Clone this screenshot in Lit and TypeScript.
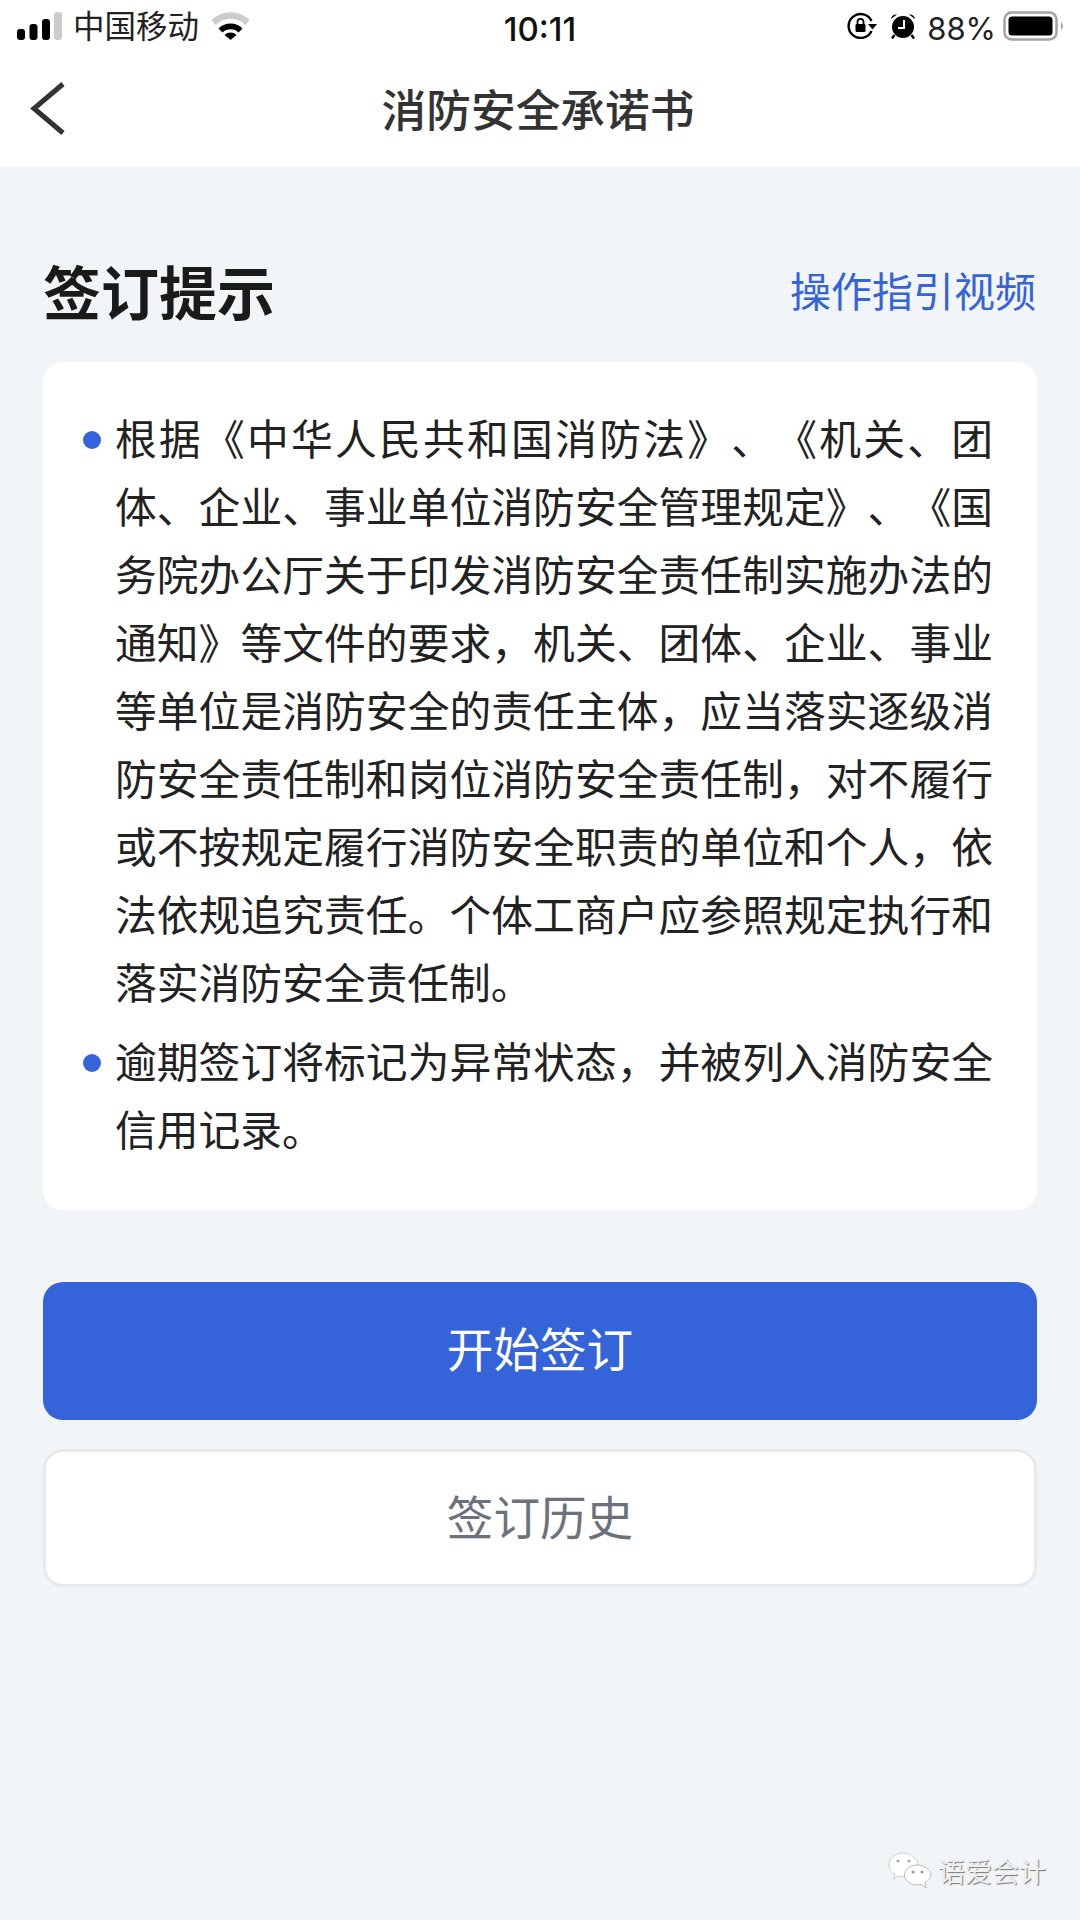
import { LitElement, html, css } from "lit";
import { customElement } from "lit/decorators.js";

@customElement("app-root")
export class AppRoot extends LitElement {
  static styles = css`
    :host { display: block; width: 1080px; height: 1920px; background: #f2f5f8; position: relative; overflow: hidden;
      font-family: "Noto Sans CJK SC", "Noto Sans", sans-serif; color: #222; text-spacing-trim: space-all; }
    .top { background: #fff; height: 167px; display: flex; flex-direction: column; }
    .status { height: 51px; display: grid; grid-template-columns: 1fr auto 1fr; align-items: center; }
    .left, .right { display: flex; align-items: center; }
    .left { padding-left: 17px; }
    .right { justify-content: flex-end; padding-right: 14px; }
    .carrier { font-size: 31.5px; line-height: 40px; margin: -3px 12px 0 11px; color: #222; }
    .time { font-family: Inter, sans-serif; font-size: 33px; font-weight: 500; color: #111; padding-top: 6px; }
    .pct { font-family: Inter, sans-serif; font-size: 31px; margin: 0 7px 0 11px; padding-top: 5px; color: #222; }
    .lock { margin-right: 13px; }
    .nav { flex: 1; display: flex; align-items: center; justify-content: center; position: relative; padding: 0 4px 2px 0; }
    .back { position: absolute; left: 28px; top: 29px; }
    .nav-title { font-size: 44.7px; line-height: 60px; font-weight: 500; color: #333; }
    .main { padding: 84px 43px 0; }
    .head { display: flex; justify-content: space-between; align-items: center; height: 84px; margin-bottom: 27px; }
    .head h1 { margin: -6px 0 0; font-size: 58px; font-weight: 700; color: #1a1a1a; line-height: 84px; }
    .link { font-size: 41px; color: #3563da; line-height: 60px; margin: -8px 1px 0 0; }
    .card { background: #fff; border-radius: 20px; padding: 41px 44px 48px 40px; display: flex; flex-direction: column; gap: 11px; }
    .item { display: flex; }
    .dot { flex: none; width: 18px; height: 18px; border-radius: 50%; background: #3563da; margin: 28px 14px 0 0; }
    .item p { margin: 0; flex: 1; min-width: 0; font-size: 41.75px; line-height: 68px; text-align: justify; color: #222; }
    .btn { display: flex; align-items: center; justify-content: center; border-radius: 20px; font-size: 46.6px; box-sizing: border-box; }
    .primary { margin-top: 72px; height: 138px; background: #3563da; color: #fff; padding-bottom: 10px; }
    .secondary { margin-top: 29px; height: 138px; background: #fff; color: #6c727c; border: 3px solid #e8e9ec; padding-bottom: 8px; }
    .mark { position: absolute; left: 888px; top: 1851px; display: flex; align-items: center; gap: 6px; font-size: 27px; color: #eef0f3; text-shadow: 1px 1px 1px #777; }
  `;

  render() {
    return html`
      <div class="top">
        <div class="status">
          <div class="left">
            <svg width="45" height="28" viewBox="0 0 45 28">
              <rect x="0" y="17" width="8" height="11" rx="3" fill="#000"/>
              <rect x="12.500" y="12" width="8" height="16" rx="3" fill="#000"/>
              <rect x="25" y="7" width="8" height="21" rx="3" fill="#000"/>
              <rect x="37" y="0" width="8" height="28" rx="3" fill="#ccc"/>
            </svg>
            <span class="carrier">中国移动</span>
            <svg width="39" height="29" viewBox="0 0 38 29">
              <path d="M0 9 A27 27 0 0 1 38 9 L34 14 A21 21 0 0 0 4 14 Z" fill="#ccc"/>
              <path d="M7 17.500 A17 17 0 0 1 31 17.500 L27 21.500 A11.500 11.500 0 0 0 11 21.500 Z" fill="#000"/>
              <path d="M13 24 A8.500 8.500 0 0 1 25 24 L19 29 Z" fill="#000"/>
            </svg>
          </div>
          <div class="time">10:11</div>
          <div class="right">
            <svg class="lock" width="30" height="27" viewBox="0 0 30 27">
              <path d="M24.500 9 A12 12 0 1 0 24.500 19" fill="none" stroke="#000" stroke-width="2.400"/>
              <path d="M21 12 H30 L25.500 17.500 Z" fill="#000"/>
              <rect x="8.500" y="12" width="10" height="8" rx="1.200" fill="#000"/>
              <path d="M10.500 12 V9.800 A3 3 0 0 1 16.500 9.800 V12" fill="none" stroke="#000" stroke-width="1.800"/>
            </svg>
            <svg width="26" height="26" viewBox="0 0 26 26">
              <circle cx="13" cy="14" r="11" fill="#000"/>
              <path d="M1 6 A5 5 0 0 1 7 1.500 Z M25 6 A5 5 0 0 0 19 1.500 Z" fill="#000"/>
              <path d="M4.500 22 L2 25.500 M21.500 22 L24 25.500" stroke="#000" stroke-width="2.400"/>
              <path d="M14 7 V15 H8" fill="none" stroke="#fff" stroke-width="2"/>
            </svg>
            <span class="pct">88%</span>
            <svg width="63" height="30" viewBox="0 0 63 30">
              <rect x="1.500" y="1.500" width="52" height="27" rx="7" fill="none" stroke="#a3a3a3" stroke-width="2.500"/>
              <rect x="5.500" y="5.500" width="44" height="19" rx="3.500" fill="#000"/>
              <path d="M58 11 A5 5 0 0 1 58 19 Z" fill="#a3a3a3"/>
            </svg>
          </div>
        </div>
        <div class="nav">
          <svg class="back" width="38" height="58" viewBox="0 0 38 58">
            <path d="M35 4 L6 28.500 L35 53" fill="none" stroke="#333" stroke-width="5"/>
          </svg>
          <div class="nav-title">消防安全承诺书</div>
        </div>
      </div>
      <div class="main">
        <div class="head">
          <h1>签订提示</h1>
          <span class="link">操作指引视频</span>
        </div>
        <div class="card">
          <div class="item">
            <span class="dot"></span>
            <p>根据《中华人民共和国消防法》、《机关、团体、企业、事业单位消防安全管理规定》、《国务院办公厅关于印发消防安全责任制实施办法的通知》等文件的要求，机关、团体、企业、事业等单位是消防安全的责任主体，应当落实逐级消防安全责任制和岗位消防安全责任制，对不履行或不按规定履行消防安全职责的单位和个人，依法依规追究责任。个体工商户应参照规定执行和落实消防安全责任制。</p>
          </div>
          <div class="item">
            <span class="dot"></span>
            <p>逾期签订将标记为异常状态，并被列入消防安全信用记录。</p>
          </div>
        </div>
        <div class="btn primary">开始签订</div>
        <div class="btn secondary">签订历史</div>
      </div>
      <div class="mark">
        <svg width="44" height="38" viewBox="0 0 44 38">
          <path d="M15 1 C7 1 1 6.500 1 13 C1 17 3.500 20.500 7 22.500 L5.500 27 L11 24 C12.500 24.500 14 24.600 15.500 24.600 C24 24.600 30 19 30 13 C30 6.500 23 1 15 1 Z" fill="#fff" stroke="#ccc" stroke-width="1"/>
          <path d="M29 13 C22 13 16.500 17.500 16.500 23 C16.500 28.500 22 33 29 33 C30.500 33 32 32.800 33 32.400 L38 36 L37 30.500 C40.500 28.500 43 26 43 23 C43 17.500 36 13 29 13 Z" fill="#fff" stroke="#bbb" stroke-width="1"/>
          <circle cx="10" cy="9" r="1.600" fill="#aaa"/><circle cx="21" cy="9" r="1.600" fill="#aaa"/>
          <circle cx="25" cy="20" r="1.600" fill="#999"/><circle cx="34" cy="20" r="1.600" fill="#999"/>
        </svg>
        <span>语爱会计</span>
      </div>
    `;
  }
}
